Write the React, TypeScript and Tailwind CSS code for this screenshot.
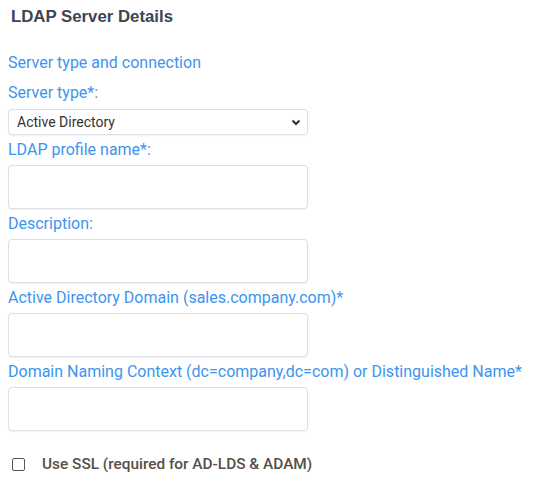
import React from 'react';

const labelCls = "block text-[16px] leading-[22px] text-[#3d94f0] py-[4px]";
const inputCls =
  "block w-[300px] h-[44px] rounded-[4px] border border-[#dcdfe4] bg-white shadow-[0_1px_2px_rgba(0,0,0,0.06)]";

const Field = ({ label }: { label: string }) => (
  <div>
    <label className={labelCls}>{label}</label>
    <input type="text" className={inputCls} />
  </div>
);

export default function App() {
  return (
    <div className="bg-white min-h-screen font-['Roboto',sans-serif] pl-[8px]">
      <h2 className="pt-[7px] pl-[3px] text-[16.8px] leading-[20px] font-bold text-[#3c4552] font-['Liberation_Sans',Arial,sans-serif]">
        LDAP Server Details
      </h2>

      <div className="mt-[21px]">
        <div className={labelCls}>Server type and connection</div>
        <label className={labelCls}>Server type*:</label>
        <div className="relative w-[300px] mt-[1px]">
          <select className="block appearance-none w-[300px] h-[26px] rounded-[4px] border border-[#dcdfe4] bg-white pl-[8px] text-[14px] text-[#333] shadow-[0_1px_2px_rgba(0,0,0,0.06)]">
            <option>Active Directory</option>
          </select>
          <svg
            className="absolute right-[7px] top-[10px] pointer-events-none"
            width="10"
            height="7"
            viewBox="0 0 10 7"
          >
            <path d="M1.5 1.5 L5 5 L8.5 1.5" fill="none" stroke="#333" strokeWidth="2" />
          </svg>
        </div>

        <Field label="LDAP profile name*:" />
        <Field label="Description:" />
        <Field label="Active Directory Domain (sales.company.com)*" />
        <Field label="Domain Naming Context (dc=company,dc=com) or Distinguished Name*" />

        <label className="flex items-center mt-[22px] pl-[4px]">
          <input
            type="checkbox"
            className="appearance-none w-[13px] h-[13px] rounded-[2px] border border-[#555] bg-white"
          />
          <span className="ml-[17px] text-[15.4px] font-medium text-[#574e48]">
            Use SSL (required for AD-LDS &amp; ADAM)
          </span>
        </label>
      </div>
    </div>
  );
}
